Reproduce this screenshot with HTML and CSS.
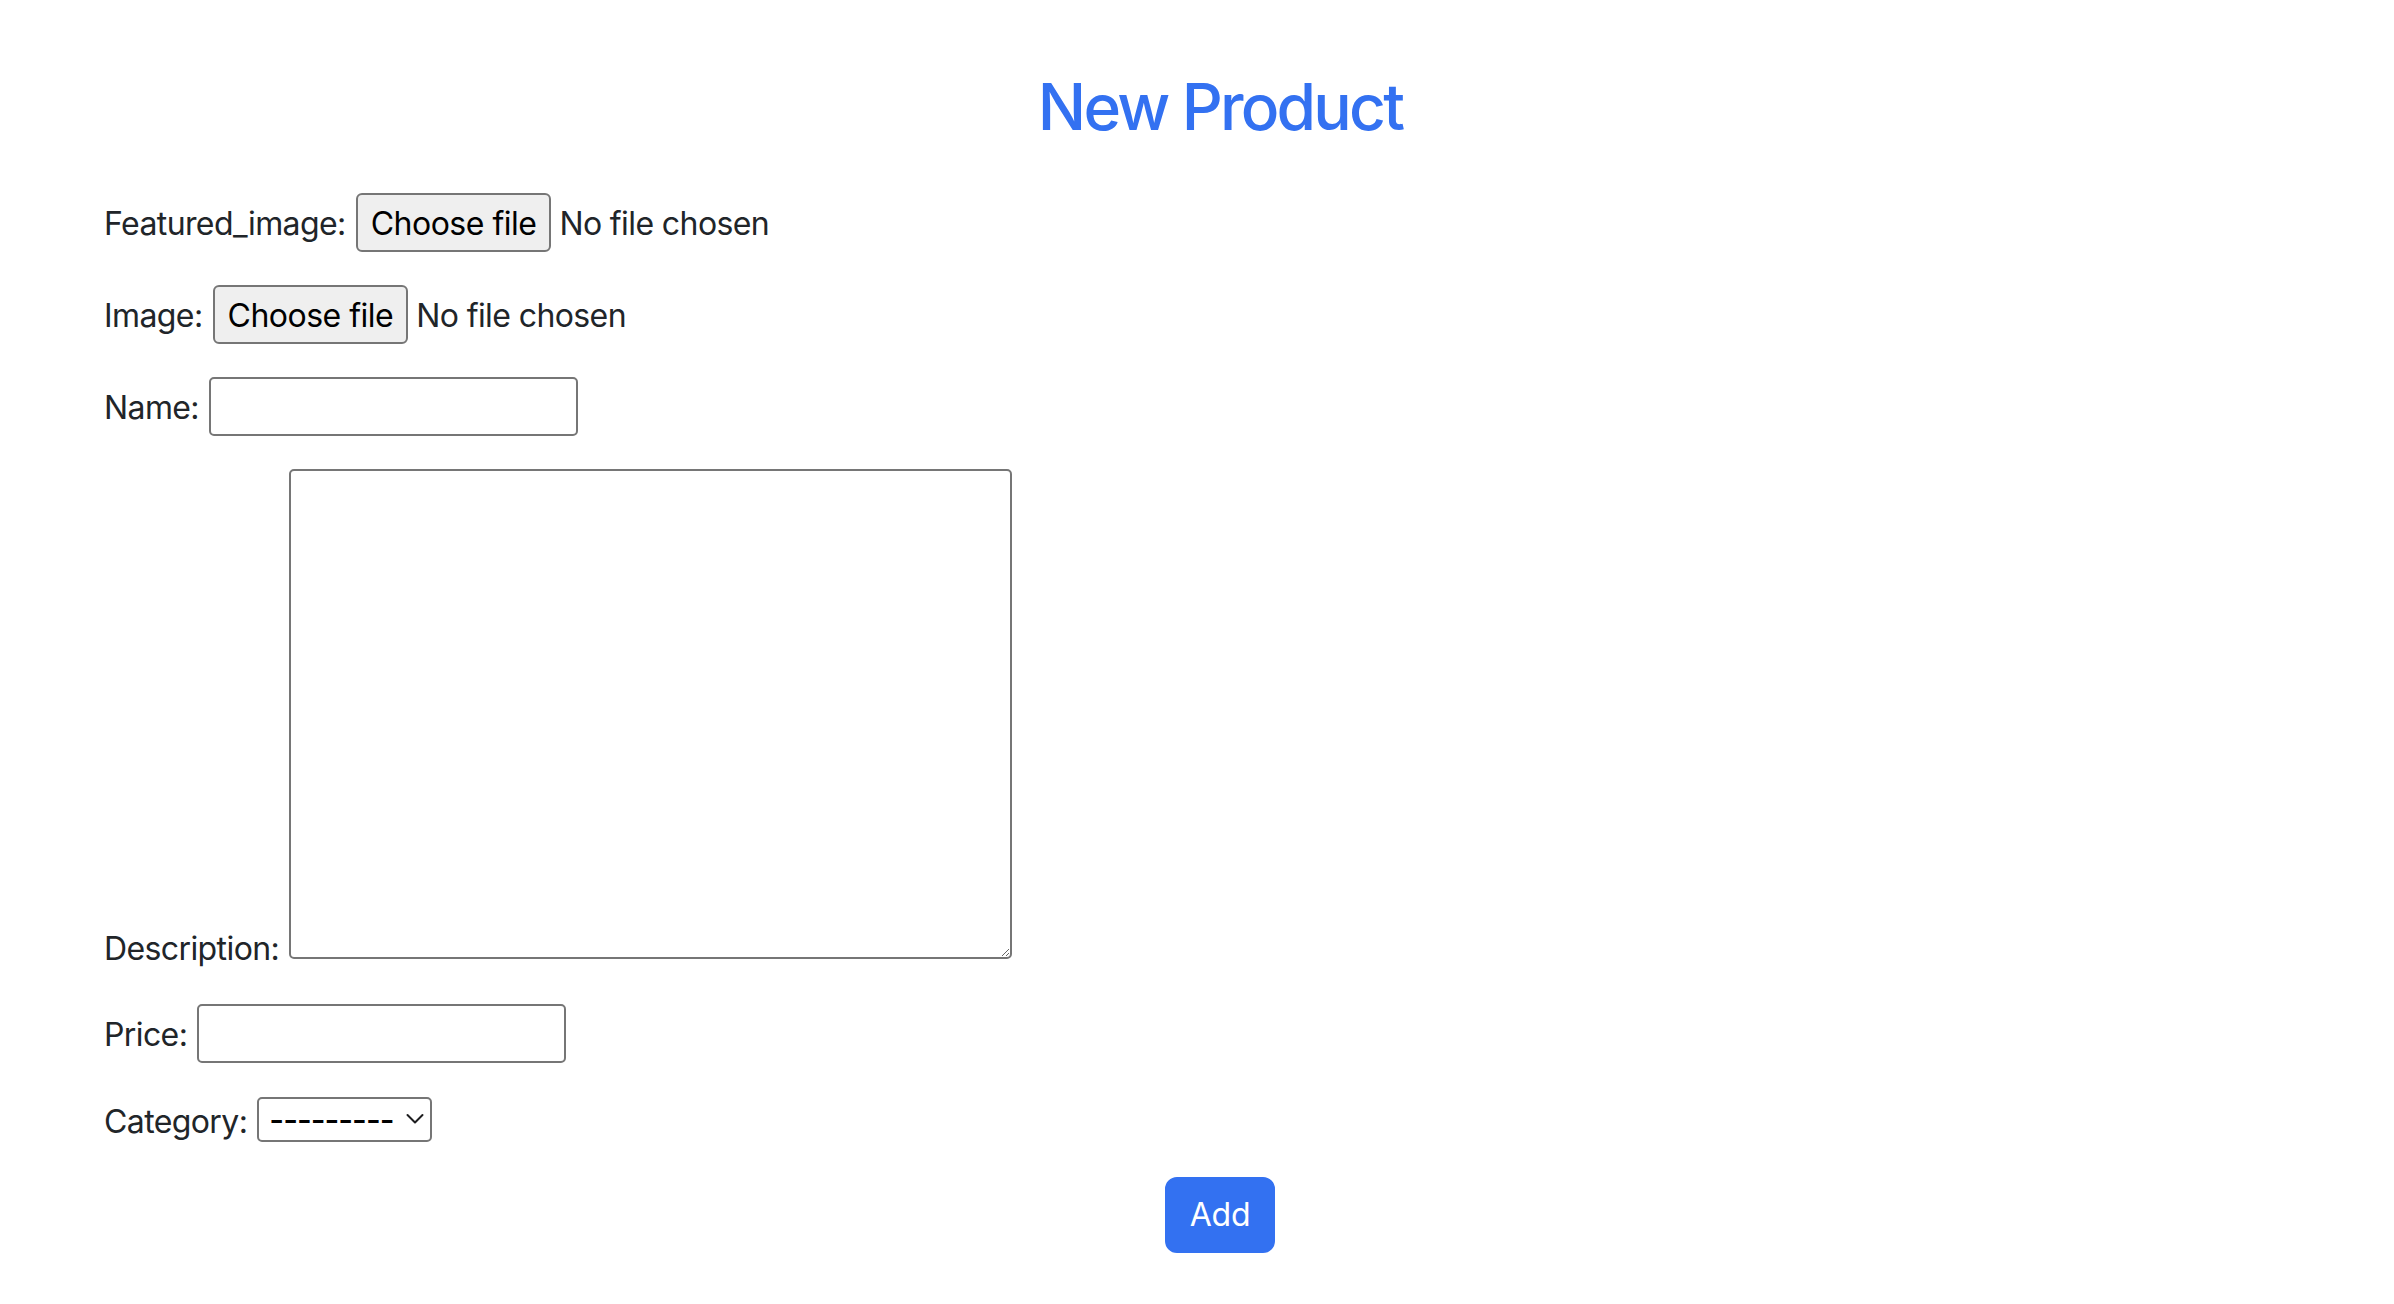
FILE: index.html
```html
<!DOCTYPE html>
<html lang="en">
<head>
<meta charset="utf-8">
<title>New Product</title>
<link rel="stylesheet" href="styles.css">
</head>
<body>
<main class="page">
  <h1 class="title">New Product</h1>
  <form class="product-form">
    <div class="row">
      <label class="label" for="f-featured">Featured_image:</label>
      <button type="button" class="file-btn" id="f-featured">Choose file</button>
      <span class="file-name">No file chosen</span>
    </div>
    <div class="row">
      <label class="label" for="f-image">Image:</label>
      <button type="button" class="file-btn" id="f-image">Choose file</button>
      <span class="file-name">No file chosen</span>
    </div>
    <div class="row">
      <label class="label" for="f-name">Name:</label>
      <input class="text-input" type="text" id="f-name">
    </div>
    <div class="row row-bottom">
      <label class="label" for="f-desc">Description:</label>
      <textarea class="textarea" id="f-desc"></textarea>
    </div>
    <div class="row">
      <label class="label" for="f-price">Price:</label>
      <input class="text-input" type="text" id="f-price">
    </div>
    <div class="row">
      <label class="label" for="f-cat">Category:</label>
      <span class="select-wrap">
        <select class="select" id="f-cat">
          <option>---------</option>
        </select>
        <svg class="chevron" width="18" height="12" viewBox="0 0 18 12" aria-hidden="true">
          <path d="M1.5 2 L9 9.5 L16.5 2" fill="none" stroke="#1d1d1f" stroke-width="2" stroke-linecap="round" stroke-linejoin="round"/>
        </svg>
      </span>
    </div>
    <div class="actions">
      <button type="button" class="add-btn">Add</button>
    </div>
  </form>
</main>
</body>
</html>
```

FILE: styles.css
```css
html, body {
  margin: 0;
  padding: 0;
  background: #ffffff;
}

body {
  font-family: Inter, "Noto Sans", sans-serif;
  font-size: 32px;
  line-height: 48px;
  letter-spacing: -0.6px;
  color: #212529;
}

.page {
  padding: 69px 58px 0 104px;
}

.title {
  margin: 0 0 47px;
  font-size: 64px;
  line-height: 76.8px;
  font-weight: 500;
  letter-spacing: -2.8px;
  text-align: center;
  color: #3371f1;
}

.product-form {
  display: flex;
  flex-direction: column;
}

.row {
  display: flex;
  align-items: center;
  gap: 10px;
  margin-bottom: 33px;
}

.row-bottom {
  align-items: flex-end;
}

.label {
  margin: 2px 0 -2px;
  line-height: 48px;
  white-space: nowrap;
}

.file-btn {
  box-sizing: border-box;
  height: 59px;
  padding: 4px 13px 0;
  font-family: inherit;
  font-size: 32px;
  line-height: 1;
  letter-spacing: -0.5px;
  color: #000000;
  background: #efefef;
  border: 2px solid #767676;
  border-radius: 6px;
}

.file-name {
  margin: 2px 0 -2px -2px;
  line-height: 48px;
}

.text-input {
  box-sizing: border-box;
  width: 369px;
  height: 59px;
  padding: 2px 4px;
  font-family: inherit;
  font-size: 32px;
  background: #ffffff;
  border: 2px solid #767676;
  border-radius: 5px;
}

.textarea {
  box-sizing: border-box;
  width: 723px;
  height: 490px;
  margin-bottom: 12px;
  padding: 4px;
  font-family: inherit;
  font-size: 32px;
  background: #ffffff;
  border: 2px solid #767676;
  border-radius: 5px;
}

.select-wrap {
  position: relative;
  display: inline-flex;
}

.select {
  appearance: none;
  -webkit-appearance: none;
  box-sizing: border-box;
  width: 175px;
  height: 45px;
  padding: 0 0 0 10px;
  font-family: inherit;
  font-size: 32px;
  font-weight: 500;
  line-height: 41px;
  letter-spacing: -1px;
  color: #000000;
  background: #ffffff;
  border: 2px solid #767676;
  border-radius: 5px;
}

.chevron {
  position: absolute;
  right: 8px;
  top: 16px;
  pointer-events: none;
}

.actions {
  display: flex;
  justify-content: center;
}

.add-btn {
  box-sizing: border-box;
  width: 110px;
  height: 76px;
  padding: 0;
  font-family: inherit;
  font-size: 32px;
  line-height: 48px;
  letter-spacing: -0.3px;
  color: #ffffff;
  background: #3371f1;
  border: 2px solid #3371f1;
  border-radius: 12px;
}
```
